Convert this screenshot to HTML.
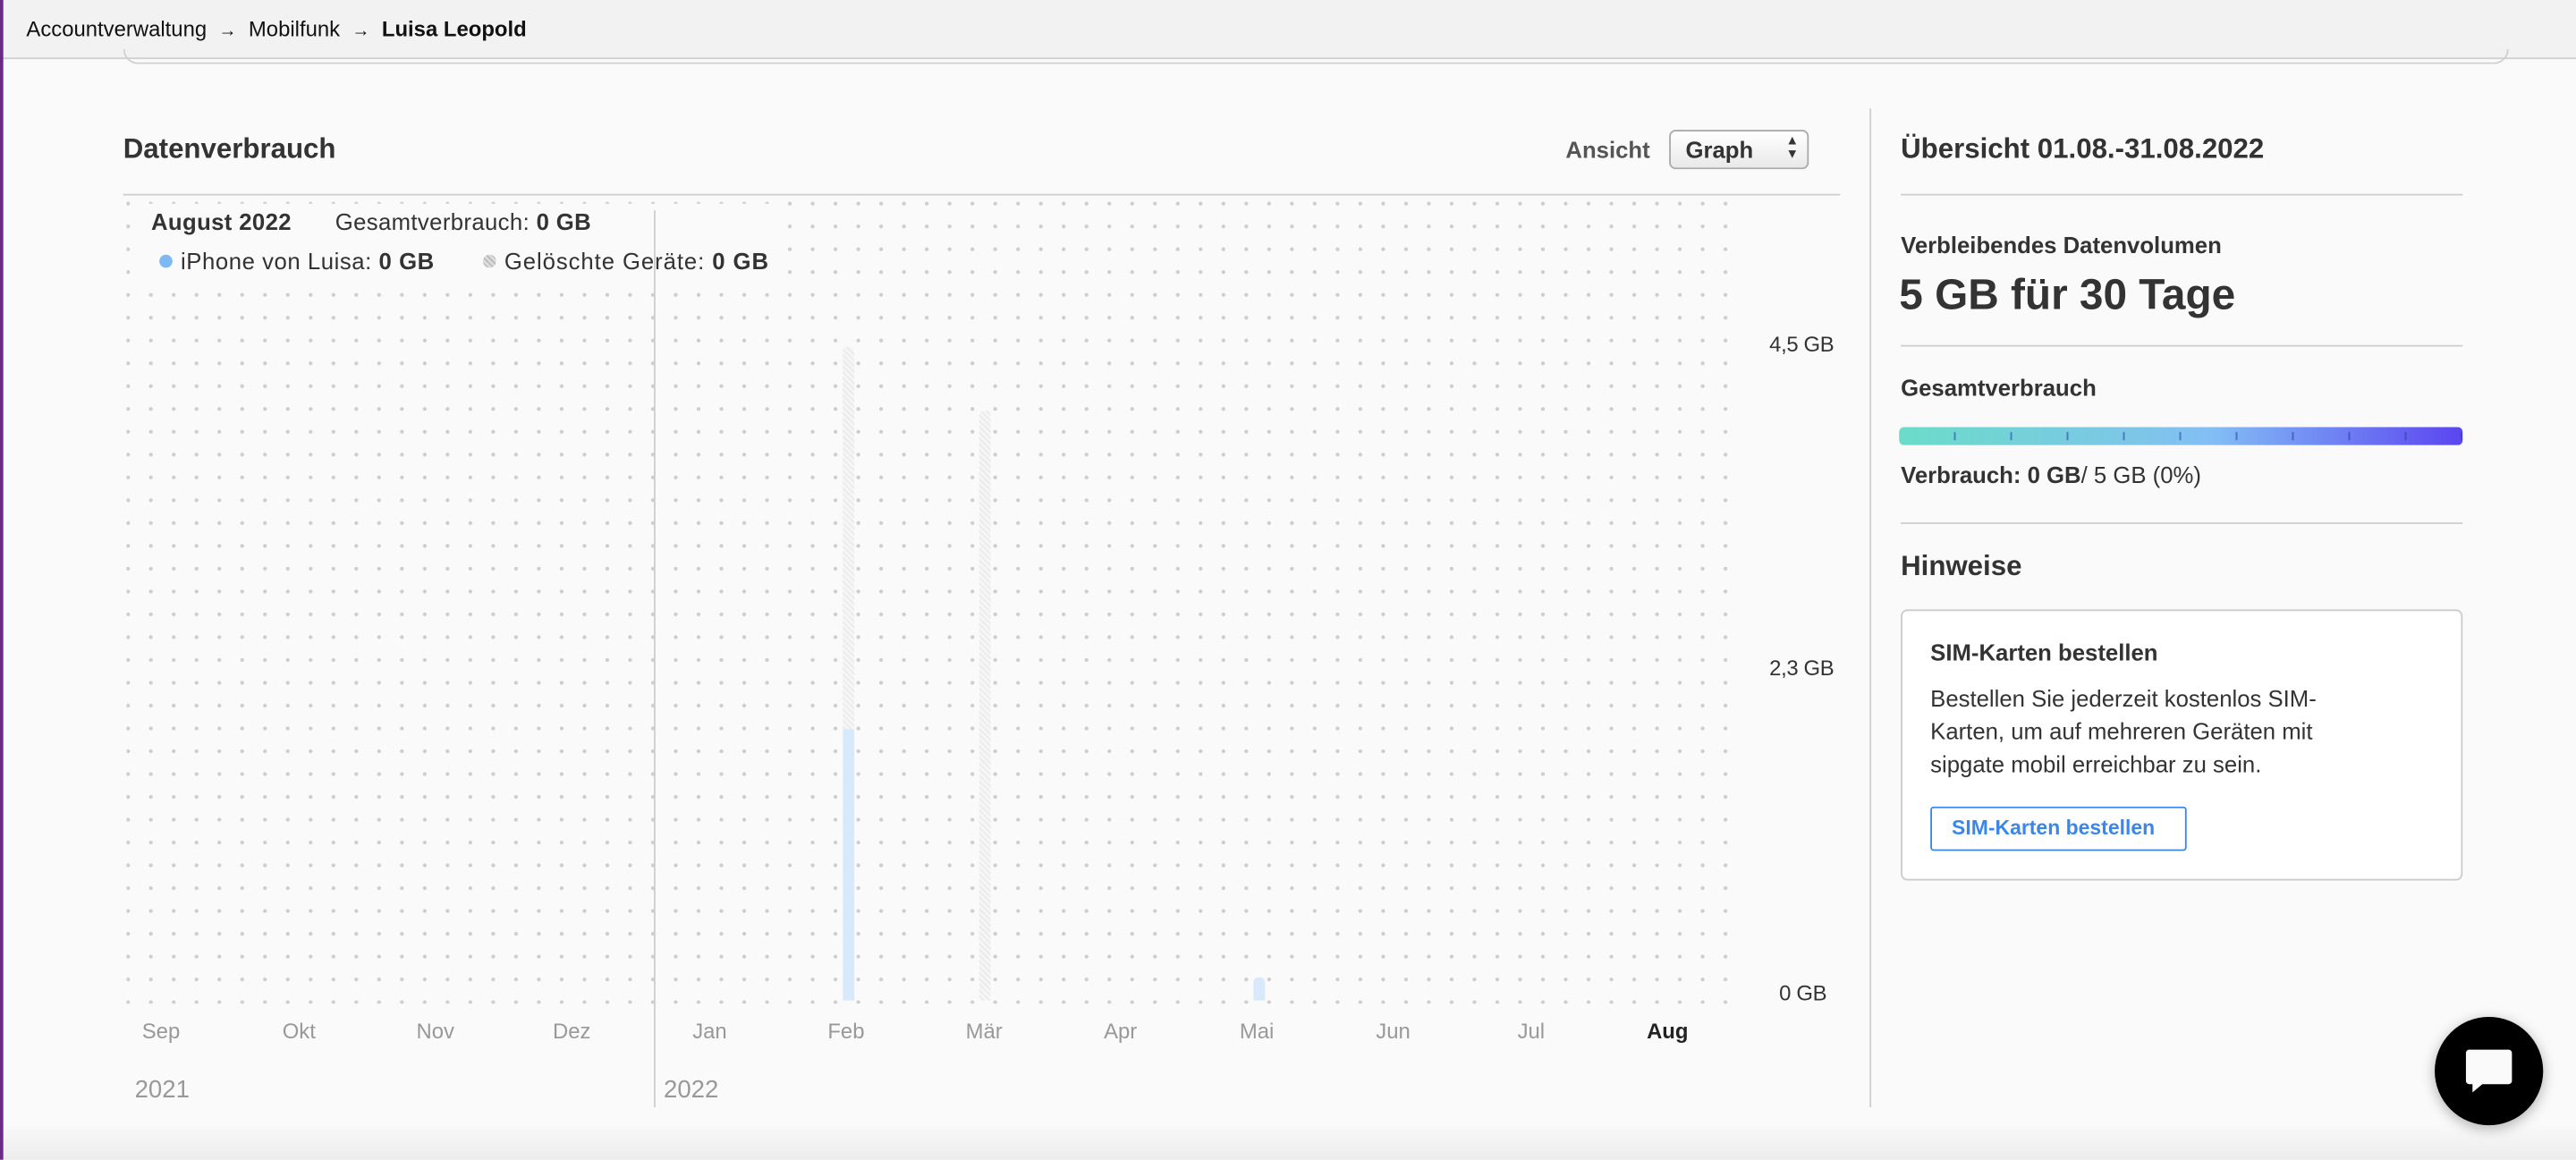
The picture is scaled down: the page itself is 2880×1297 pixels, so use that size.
<!DOCTYPE html>
<html><head><meta charset="utf-8"><style>
html,body{margin:0;padding:0;width:2880px;height:1297px;overflow:hidden;background:#fafafa}
#s{position:absolute;left:0;top:0;width:1568px;height:706px;transform:scale(1.836735);transform-origin:0 0;font-family:"Liberation Sans",sans-serif;color:#333;background:#fafafa}
.a{position:absolute;white-space:nowrap}
.top{position:absolute;left:0;top:0;width:1568px;height:35px;background:#f2f2f2;border-bottom:1px solid #d0d0d0}
.hl{position:absolute;height:1px;background:#cfcfcf}
.m{position:absolute;top:620px;font-size:13px;color:#999;transform:translateX(-50%)}
.yl{position:absolute;font-size:13px;color:#333;letter-spacing:-.2px}
.stripe{position:absolute;background:repeating-linear-gradient(45deg,#f6f6f6 0 1.5px,#ebebeb 1.5px 2.5px);border-radius:3px 3px 0 0}
</style></head><body><div id="s">
<div class="top"></div>
<div class="a" style="left:16px;top:10px;font-size:13px;color:#111">Accountverwaltung &nbsp;<span style="font-size:11px">→</span>&nbsp; Mobilfunk &nbsp;<span style="font-size:11px">→</span>&nbsp; <b>Luisa Leopold</b></div>
<div style="position:absolute;left:75px;top:30px;width:1450px;height:8px;border:1px solid #d0d0d0;border-top:none;border-radius:0 0 10px 10px"></div>

<div class="a" style="left:75px;top:81px;font-size:17px;font-weight:bold;color:#333">Datenverbrauch</div>
<div class="a" style="left:953px;top:83px;font-size:14px;color:#555;font-weight:bold">Ansicht</div>
<div style="position:absolute;left:1016px;top:79px;width:85px;height:24px;border:1px solid #aaa;border-radius:4px;background:linear-gradient(#fff,#e9e9e9);box-sizing:border-box"></div>
<div class="a" style="left:1026px;top:83px;font-size:14px;font-weight:bold;color:#333">Graph</div>
<div class="a" style="left:1087px;top:82px;font-size:8px;line-height:8px;color:#333">▲<br>▼</div>
<div class="hl" style="left:75px;top:118px;width:1045px"></div>
<div style="position:absolute;left:1138px;top:66px;width:1px;height:608px;background:#d0d0d0"></div>

<div style="position:absolute;left:77px;top:122px;width:980px;height:489px;background-image:radial-gradient(circle,#cdcdcd 1px,transparent 1.3px);background-size:13.9px 13.9px;background-position:-6px -5px"></div>
<div style="position:absolute;left:84px;top:124px;width:390px;height:46px;background:#fafafa"></div>
<div style="position:absolute;left:398px;top:128px;width:1px;height:546px;background:#cfcfcf"></div>

<div class="a" style="left:92px;top:127px;font-size:14px;font-weight:bold;letter-spacing:.2px">August 2022</div>
<div class="a" style="left:204px;top:127px;font-size:14px;letter-spacing:.2px">Gesamtverbrauch: <b>0 GB</b></div>
<div style="position:absolute;left:97px;top:155px;width:8px;height:8px;border-radius:50%;background:#7dbaf5"></div>
<div class="a" style="left:110px;top:151px;font-size:14px;letter-spacing:.3px">iPhone von Luisa: <b>0 GB</b></div>
<div style="position:absolute;left:294px;top:155px;width:8px;height:8px;border-radius:50%;background:repeating-linear-gradient(45deg,#ddd 0 1.5px,#bbb 1.5px 2.5px)"></div>
<div class="a" style="left:307px;top:151px;font-size:14px;letter-spacing:.5px">Gelöschte Geräte: <b>0 GB</b></div>

<div class="stripe" style="left:513px;top:211px;width:7px;height:234px"></div>
<div style="position:absolute;left:513px;top:444px;width:7px;height:165px;background:#d8e9fb"></div>
<div class="stripe" style="left:596px;top:250px;width:7px;height:359px"></div>
<div style="position:absolute;left:763px;top:595px;width:7px;height:14px;background:#d8e9fb;border-radius:3px 3px 0 0"></div>

<div class="yl" style="left:1077px;top:202px">4,5 GB</div>
<div class="yl" style="left:1077px;top:399px">2,3 GB</div>
<div class="yl" style="left:1083px;top:597px">0 GB</div>

<div class="m" style="left:98px">Sep</div><div class="m" style="left:182px">Okt</div><div class="m" style="left:265px">Nov</div><div class="m" style="left:348px">Dez</div><div class="m" style="left:432px">Jan</div><div class="m" style="left:515px">Feb</div><div class="m" style="left:599px">Mär</div><div class="m" style="left:682px">Apr</div><div class="m" style="left:765px">Mai</div><div class="m" style="left:848px">Jun</div><div class="m" style="left:932px">Jul</div><div class="m" style="left:1015px;color:#222;font-weight:bold">Aug</div>
<div class="a" style="left:82px;top:655px;font-size:15px;color:#999">2021</div>
<div class="a" style="left:404px;top:655px;font-size:15px;color:#999">2022</div>

<div class="a" style="left:1157px;top:81px;font-size:17px;font-weight:bold">Übersicht 01.08.-31.08.2022</div>
<div class="hl" style="left:1157px;top:118px;width:342px"></div>
<div class="a" style="left:1157px;top:141px;font-size:14px;font-weight:bold">Verbleibendes Datenvolumen</div>
<div class="a" style="left:1156px;top:164px;font-size:26px;font-weight:bold">5 GB für 30 Tage</div>
<div class="hl" style="left:1157px;top:210px;width:342px"></div>
<div class="a" style="left:1157px;top:228px;font-size:14px;font-weight:bold">Gesamtverbrauch</div>
<div style="position:absolute;left:1156px;top:260px;width:343px;height:11px;border-radius:3px;background-image:repeating-linear-gradient(90deg,transparent 0 33.3px,rgba(30,60,160,.55) 33.3px 34.3px),linear-gradient(90deg,#6bdcc9,#7cc7e6 40%,#83bff5 55%,#5b45f1);background-size:100% 5px,100% 100%;background-position:0 3px,0 0;background-repeat:no-repeat"></div>
<div class="a" style="left:1157px;top:281px;font-size:14px"><b>Verbrauch: 0 GB</b>/ 5 GB (0%)</div>
<div class="hl" style="left:1157px;top:318px;width:342px"></div>
<div class="a" style="left:1157px;top:335px;font-size:17px;font-weight:bold">Hinweise</div>
<div style="position:absolute;left:1157px;top:371px;width:342px;height:165px;box-sizing:border-box;border:1px solid #ccc;border-radius:4px;background:#fff"></div>
<div class="a" style="left:1175px;top:389px;font-size:14px;font-weight:bold">SIM-Karten bestellen</div>
<div class="a" style="left:1175px;top:415px;font-size:14px;line-height:20px;color:#333">Bestellen Sie jederzeit kostenlos SIM-<br>Karten, um auf mehreren Geräten mit<br>sipgate mobil erreichbar zu sein.</div>
<div style="position:absolute;left:1175px;top:491px;width:156px;height:27px;box-sizing:border-box;border:1px solid #3b86ea;border-radius:2px"></div>
<div class="a" style="left:1188px;top:497px;font-size:12.5px;font-weight:bold;color:#3b86ea">SIM-Karten bestellen</div>

<div style="position:absolute;left:0;top:684px;width:1568px;height:22px;background:linear-gradient(#fafafa,#ececec)"></div>
<div style="position:absolute;left:0;top:0;width:2px;height:706px;background:#6b2a86"></div>
<div style="position:absolute;left:1482px;top:619px;width:66px;height:66px;border-radius:50%;background:#000;box-shadow:0 2px 8px rgba(0,0,0,.3)"></div>
<svg style="position:absolute;left:1500px;top:637px" width="30" height="32" viewBox="0 0 30 32"><path d="M3 2h24a2 2 0 0 1 2 2v17a2 2 0 0 1-2 2H11l-6 5v-5H3a2 2 0 0 1-2-2V4a2 2 0 0 1 2-2z" fill="#fafafa"/></svg>
</div></body></html>
